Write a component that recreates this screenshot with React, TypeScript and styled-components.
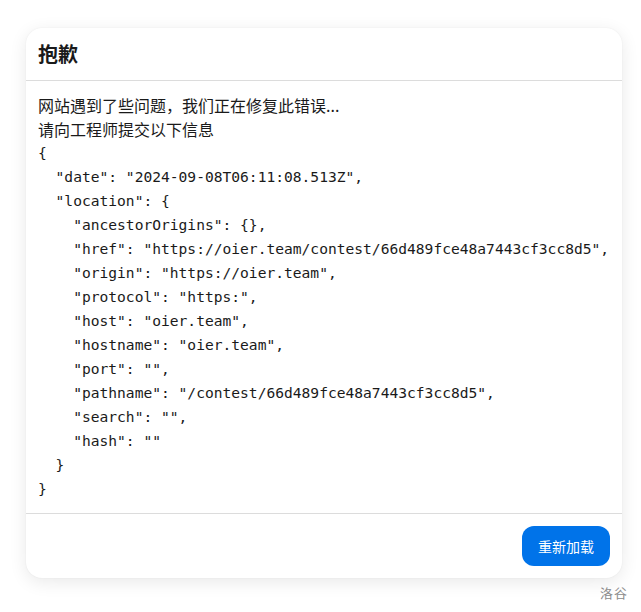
import React from 'react';
import styled, { createGlobalStyle } from 'styled-components';

const GlobalStyle = createGlobalStyle`
  body {
    margin: 0;
    background: #fff;
    font-family: "Noto Sans CJK SC", "Noto Sans", sans-serif;
    color: #1a1a1a;
  }
`;

const Page = styled.div`
  width: 641px;
  height: 612px;
  box-sizing: border-box;
  padding: 28px 19px 0 26px;
  display: flex;
  flex-direction: column;
`;

const Card = styled.section`
  background: #fff;
  border-radius: 16px;
  box-shadow: 0 4px 18px rgba(0, 0, 0, 0.09), 0 0 2px rgba(0, 0, 0, 0.06);
  display: flex;
  flex-direction: column;
  overflow: hidden;
`;

const Header = styled.header`
  height: 53px;
  box-sizing: border-box;
  padding: 0 12px;
  display: flex;
  align-items: center;
  border-bottom: 1px solid #dcdcdc;
  h1 {
    margin: 0;
    font-size: 20px;
    font-weight: 700;
    line-height: 1;
  }
`;

const Body = styled.div`
  padding: 12px 12px;
  border-bottom: 1px solid #dcdcdc;
  font-size: 16px;
  line-height: 24px;
  p {
    margin: 0;
  }
`;

const Code = styled.pre`
  margin: 0;
  font-family: "DejaVu Sans Mono", monospace;
  font-size: 14.6px;
  line-height: 24px;
  color: #1a1a1a;
  white-space: pre;
`;

const Footer = styled.footer`
  padding: 12px;
  display: flex;
  justify-content: flex-end;
`;

const Button = styled.button`
  height: 40px;
  width: 88px;
  border: none;
  border-radius: 12px;
  background: #0073e9;
  color: #fff;
  font-family: "Noto Sans CJK SC", sans-serif;
  font-size: 14px;
  cursor: pointer;
`;

const Brand = styled.div`
  align-self: flex-end;
  margin: 5px -6px 0 0;
  font-size: 13px;
  color: #8c8c8c;
  letter-spacing: 1px;
`;

const info = `{
  "date": "2024-09-08T06:11:08.513Z",
  "location": {
    "ancestorOrigins": {},
    "href": "https://oier.team/contest/66d489fce48a7443cf3cc8d5",
    "origin": "https://oier.team",
    "protocol": "https:",
    "host": "oier.team",
    "hostname": "oier.team",
    "port": "",
    "pathname": "/contest/66d489fce48a7443cf3cc8d5",
    "search": "",
    "hash": ""
  }
}`;

const App: React.FC = () => {
    return (
        <>
            <GlobalStyle />
            <Page>
                <Card>
                    <Header>
                        <h1>抱歉</h1>
                    </Header>
                    <Body>
                        <p>网站遇到了些问题，我们正在修复此错误...</p>
                        <p>请向工程师提交以下信息</p>
                        <Code>{info}</Code>
                    </Body>
                    <Footer>
                        <Button>重新加载</Button>
                    </Footer>
                </Card>
                <Brand>洛谷</Brand>
            </Page>
        </>
    );
};

export default App;
